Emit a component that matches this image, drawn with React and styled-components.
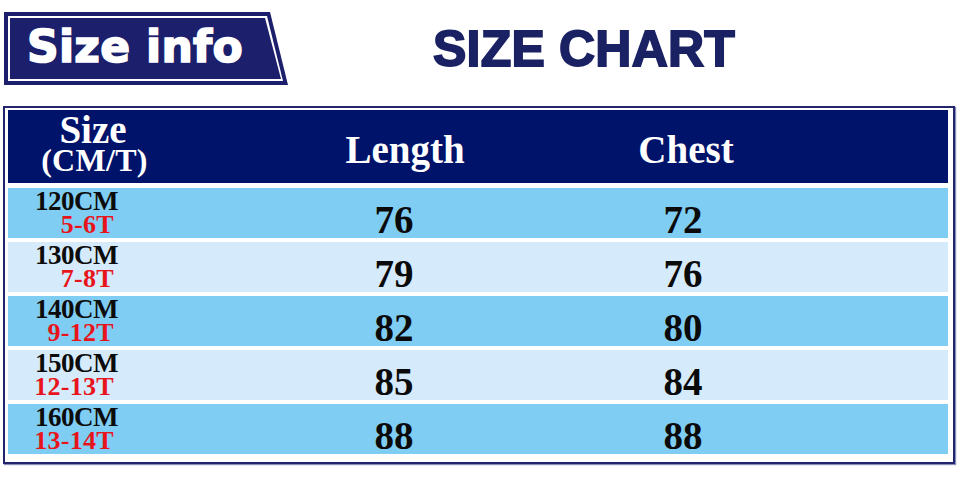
import styled, { createGlobalStyle } from "styled-components";

const rows = [
    { cm: "120CM", age: "5-6T", length: 76, chest: 72 },
    { cm: "130CM", age: "7-8T", length: 79, chest: 76 },
    { cm: "140CM", age: "9-12T", length: 82, chest: 80 },
    { cm: "150CM", age: "12-13T", length: 85, chest: 84 },
    { cm: "160CM", age: "13-14T", length: 88, chest: 88 },
];

function App() {
    return (
        <>
            <GlobalStyle />
            <StPage>
                <StTop>
                    <StBadge>
                        <StBadgeFrame>
                            <StBadgeFace>Size info</StBadgeFace>
                        </StBadgeFrame>
                    </StBadge>
                    <StTitle>SIZE CHART</StTitle>
                </StTop>
                <StTable>
                    <StHeadRow>
                        <StHeadSize>
                            <StHeadWord>Size</StHeadWord>
                            <StHeadUnit>(CM/T)</StHeadUnit>
                        </StHeadSize>
                        <StHeadCell>Length</StHeadCell>
                        <StHeadCell>Chest</StHeadCell>
                    </StHeadRow>
                    {rows.map((row, index) => (
                        <StRow key={row.cm} $light={index % 2 === 1}>
                            <StSizeCell>
                                <StCm>{row.cm}</StCm>
                                <StAge>{row.age}</StAge>
                            </StSizeCell>
                            <StValue $shift={22}>{row.length}</StValue>
                            <StValue $shift={6}>{row.chest}</StValue>
                        </StRow>
                    ))}
                </StTable>
            </StPage>
        </>
    );
}

export default App;

const GlobalStyle = createGlobalStyle`
    body {
        margin: 0;
        background: #ffffff;
    }
`;

const StPage = styled.div`
    width: 960px;
    height: 478px;
    background: #ffffff;
    overflow: hidden;
`;

const StTop = styled.div`
    display: flex;
    align-items: center;
    padding: 12px 0 0 4px;
    height: 73px;
`;

const StBadge = styled.div`
    width: 284px;
    height: 73px;
    padding: 4px;
    box-sizing: border-box;
    background: #1b1f6c;
    clip-path: polygon(0 0, 266px 0, 100% 100%, 0 100%);
`;

const StBadgeFrame = styled.div`
    width: 275px;
    height: 65px;
    padding: 2px;
    box-sizing: border-box;
    background: #ffffff;
    clip-path: polygon(0 0, 259px 0, 100% 100%, 0 100%);
`;

const StBadgeFace = styled.div`
    width: 271px;
    height: 61px;
    box-sizing: border-box;
    padding: 0 0 3px 17px;
    display: flex;
    align-items: center;
    background: #1b1f6c;
    clip-path: polygon(0 0, 255px 0, 100% 100%, 0 100%);
    color: #ffffff;
    font-family: "DejaVu Sans", sans-serif;
    font-weight: 700;
    font-size: 44px;
    line-height: 1;
    letter-spacing: 0.3px;
    white-space: nowrap;
    -webkit-text-stroke: 1.6px #ffffff;
`;

const StTitle = styled.h1`
    margin: 0 0 0 145px;
    color: #1a2263;
    font-family: "Liberation Sans", Arial, sans-serif;
    font-weight: 700;
    font-size: 50px;
    line-height: 1;
    letter-spacing: 0.2px;
    -webkit-text-stroke: 1.8px #1a2263;
`;

const StTable = styled.div`
    margin: 21px 0 0 3px;
    width: 952px;
    box-sizing: border-box;
    border: 2px solid #23246e;
    box-shadow: 1px 1px 1px #8a8fb8;
    padding: 2px 5px 8px 3px;
    display: flex;
    flex-direction: column;
    gap: 4px;
    font-family: "Liberation Serif", "Times New Roman", serif;
    font-weight: 700;
`;

const StHeadRow = styled.div`
    display: grid;
    grid-template-columns: 170px 454px 108px;
    align-items: center;
    height: 73px;
    margin-bottom: 1px;
    background: #00136b;
    color: #ffffff;
`;

const StHeadSize = styled.div`
    display: flex;
    flex-direction: column;
    align-items: center;
    padding: 0 0 2px 0;
`;

const StHeadWord = styled.span`
    font-size: 39px;
    line-height: 30px;
`;

const StHeadUnit = styled.span`
    font-size: 32px;
    line-height: 31px;
    margin-left: 3px;
    letter-spacing: 0.3px;
`;

const StHeadCell = styled.div`
    text-align: center;
    font-size: 39px;
    padding-top: 6px;
    white-space: nowrap;
`;

const StRow = styled.div`
    display: grid;
    grid-template-columns: 170px 454px 108px;
    align-items: center;
    height: 50px;
    background: ${(props) => (props.$light ? "#d5eafb" : "#80cdf3")};
`;

const StSizeCell = styled.div`
    display: flex;
    flex-direction: column;
    align-items: flex-end;
    width: 110px;
    padding-bottom: 2px;
    line-height: 23px;
`;

const StCm = styled.span`
    font-size: 27px;
    color: #0c0c0c;
    letter-spacing: -0.5px;
`;

const StAge = styled.span`
    font-size: 26px;
    color: #e8141b;
    margin-right: 4px;
    letter-spacing: 0.3px;
`;

const StValue = styled.div`
    text-align: center;
    font-size: 39px;
    color: #0a0a0a;
    padding: 12px ${(props) => props.$shift}px 0 0;
    line-height: 1;
`;
